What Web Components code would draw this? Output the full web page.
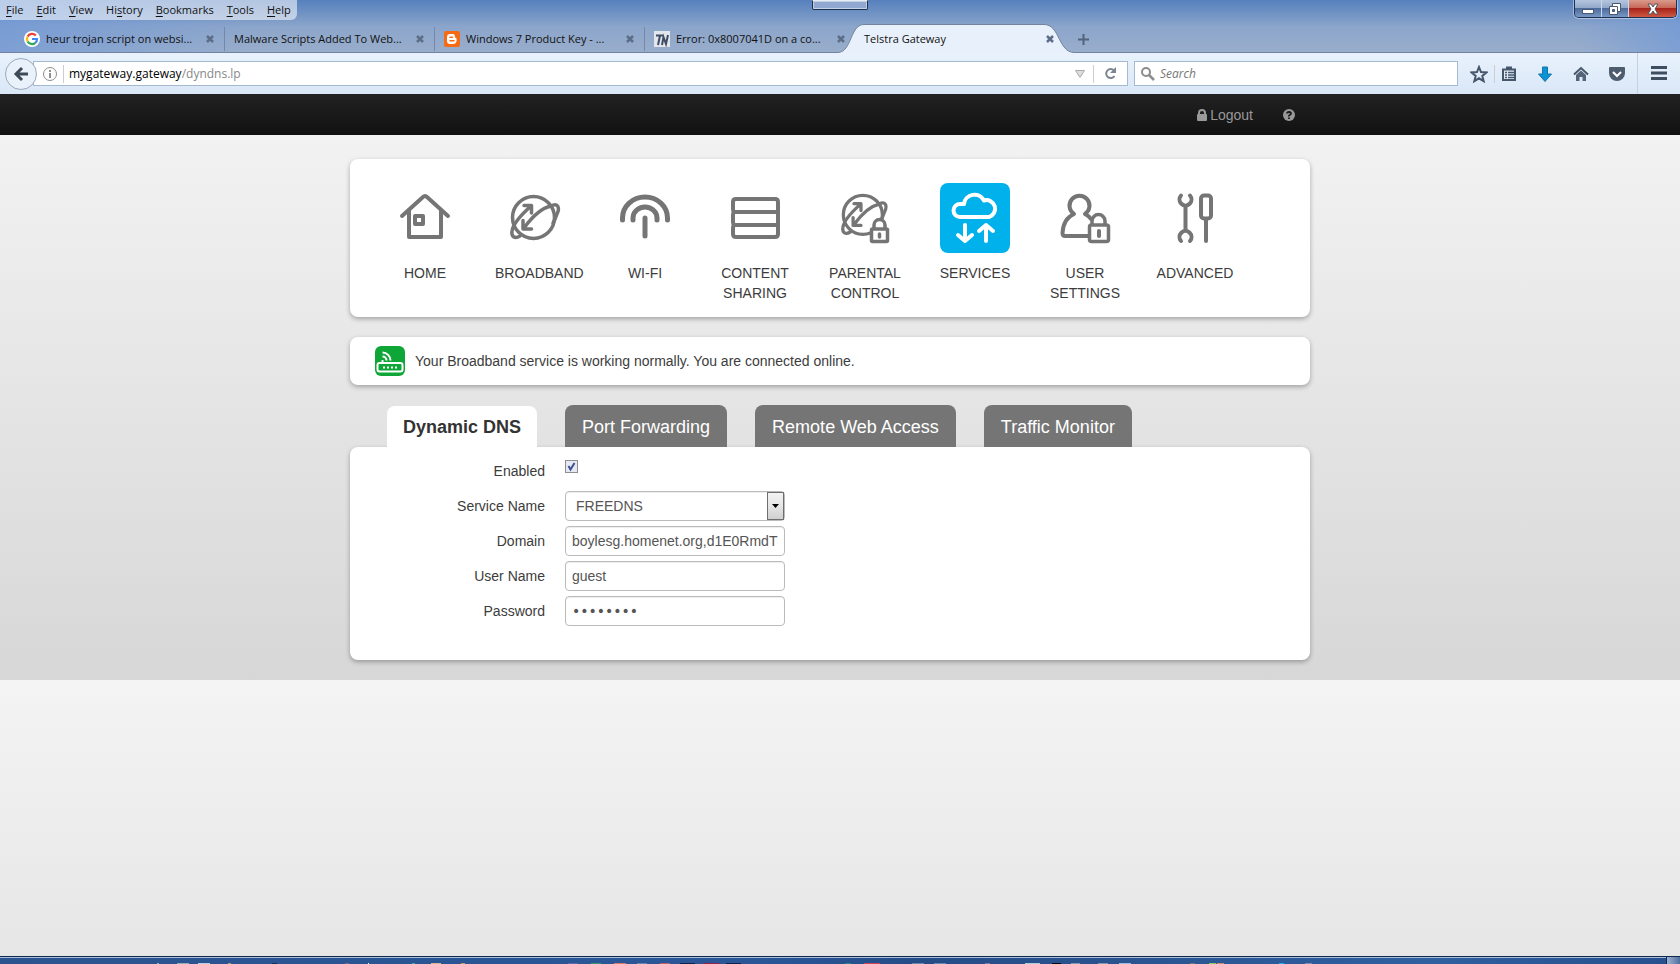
<!DOCTYPE html>
<html lang="en">
<head>
<meta charset="utf-8">
<title>Telstra Gateway</title>
<style>
html,body{margin:0;height:100%}
body{font-family:"Liberation Sans",Arial,sans-serif;font-size:14px;line-height:20px;color:#3c3c3c;background:#e6e6e6}
</style>
</head>
<body>
<desktop-screen></desktop-screen>
<script>
const define = (name, html, setup) => {
  const template = document.createElement('template');
  template.innerHTML = html;
  customElements.define(name, class extends HTMLElement {
    connectedCallback() {
      if (this.shadowRoot) return;
      this.attachShadow({ mode: 'open' }).append(template.content.cloneNode(true));
      if (setup) setup(this, this.shadowRoot);
    }
  });
};
const base = `*{box-sizing:border-box}button{font:inherit;color:inherit;background:none;border:0;padding:0;margin:0}a{color:inherit;text-decoration:none}svg{display:block}`;

/* ---------- icons ---------- */
const globe = `<g stroke-width="3.500"><circle cx="23.500" cy="24.500" r="21"/><path d="M10 43C5 46 1 44 2 38C3 31 11 22 21 13M14 12.500h7.500v7.500M41 13C48 9 50 15 47 21C46 24 45 27 43 30M41 13C32 15 22 24 14 35M13 27.500v8.500h8.500"/></g>`;
const icons = {
  home: `<path d="M2 23L23 4Q25 2 27 4L48 23M9 18V44H41V18"/><rect x="15" y="23" width="8" height="8"/>`,
  broadband: globe,
  wifi: `<path d="M2.500 27V25a22.500 21 0 0 1 45 0v2M13 27v-2a12 11 0 0 1 24 0v2M25 25V43" stroke-width="5"/>`,
  content: `<path d="M6 6H45Q48 6 48 9V41Q48 44 45 44H6Q3 44 3 41V35Q3 33 4 32Q3 31 3 29V22Q3 20 4 19Q3 18 3 16V9Q3 6 6 6ZM4 19H48M4 32H48"/>`,
  parental: `<g transform="translate(1 -1) scale(.93)">${globe}</g><g stroke-width="3.500"><path d="M34 36v-4a5.500 5.500 0 0 1 11 0v4" fill="#fff"/><rect x="31.500" y="36" width="16" height="12.500" rx="1" fill="#fff"/><path d="M39.500 41v3"/></g>`,
  services: `<g stroke="#fff"><path d="M10 24A6.500 6.500 0 0 1 10 11H14A10.500 10 0 0 1 34 7.500A8.300 8.300 0 1 1 39 24Z"/><path d="M15 32v16M8 42l7 6l7-6M36 48V32M29 38l7-6l7 6"/></g>`,
  user: `<path d="M28 43H5Q2.500 43 2.500 40C3 31 7 24 14 21A10 10 0 1 1 25 21Q29 23 31 26"/><g stroke-width="3.500"><path d="M32 32v-4a6.500 6.500 0 0 1 13 0v4" fill="#fff"/><rect x="29.500" y="32" width="19" height="16.500" rx="2" fill="#fff"/><path d="M39 38v5" stroke-width="4"/></g>`,
  advanced: `<path d="M15.500 14V37" stroke-width="4"/><path d="M11 2.500A6 6 0 1 0 20 2.500M11 48A6 6 0 1 1 20 48"/><rect x="31" y="2.500" width="10" height="23" rx="3"/><path d="M36 26V48"/>`
};

define('menu-bar', `<style>${base}
:host{display:block}
nav{display:inline-flex;gap:13px;height:20px;padding:0 6px;background:#ffffff8c;border-radius:0 0 6px 0;line-height:20px}
u{text-underline-offset:2px}
</style><nav><button><u>F</u>ile</button><button><u>E</u>dit</button><button><u>V</u>iew</button><button>Hi<u>s</u>tory</button><button><u>B</u>ookmarks</button><button><u>T</u>ools</button><button><u>H</u>elp</button></nav>`);

define('window-controls', `<style>${base}
:host{display:flex;height:18px;border:1px solid #1d2f52;border-top:0;border-radius:0 0 5px 5px;overflow:hidden;box-shadow:0 0 0 1px #ffffff66}
button{width:27px;display:grid;place-items:center;background:linear-gradient(#b4c5de,#93a9ca 45%,#4d6c9c 50%,#7797c4);border-right:1px solid #c9d8ec}
.x{width:47px;background:linear-gradient(#d99a8c,#c8695a 45%,#a8231b 50%,#cf5a43);border:0}
</style><button aria-label="Minimize"><svg width="12" height="14"><rect x=".5" y="7.500" width="11" height="4" fill="#fff" stroke="#4a5872"/></svg></button><button aria-label="Restore"><svg width="14" height="14" fill="#fff" stroke="#4a5872"><path d="M4.500 1.500h8v8h-8z"/><path d="M1.500 4.500h8v8h-8z"/><path d="M4.500 7.500h2v2h-2z" fill="#58709a"/></svg></button><button class="x" aria-label="Close"><svg width="14" height="14"><path d="M2 2h3l2 3l2-3h3L9 7l3 5H9L7 9l-2 3H2l3-5z" fill="#fff" stroke="#53565c"/></svg></button>`);

define('browser-tab', `<style>${base}
:host{box-sizing:border-box;display:flex;align-items:center;width:210px;height:24px;padding:0 9px;border-right:1px solid #7489aa;gap:6px}
:host([last]){border:0}
:host([active]){width:213px;border:0;position:relative;padding:0 13px 0 9px}
.shape{display:none;position:absolute;left:-17px;top:-3px;z-index:-1}
:host([active]) .shape{display:block}
a{flex:1;min-width:0;white-space:nowrap}
::slotted(svg){display:block;flex:none}
</style><svg class="shape" width="236" height="29"><path d="M0 28.500C14 28 12 .5 26 .5H206C222 .5 220 28 236 28.500V29H0Z" fill="#e8f1fb"/><path d="M0 28.500C14 28 12 .5 26 .5H206C222 .5 220 28 236 28.500" fill="none" stroke="#71839f"/></svg>
<slot name="icon"></slot><a href="#"><slot></slot></a><button aria-label="Close tab"><svg width="10" height="10"><path d="M2 2l6 6M8 2l-6 6" stroke="#5c6d87" stroke-width="2.500"/></svg></button>`);

define('tab-strip', `<style>${base}
:host{display:flex;align-items:center;height:28px;padding-left:15px;position:relative;z-index:0;box-shadow:inset 0 -1px #71839f}
.new{margin-left:10px}
</style>
<browser-tab><svg slot="icon" width="16" height="16"><circle cx="8" cy="8" r="8" fill="#fff"/><g fill="none" stroke-width="2.200"><path d="M11.800 4.500A5 5 0 0 0 3.600 5.600" stroke="#ea4335"/><path d="M3.600 5.600A5 5 0 0 0 3.600 10.400" stroke="#fbbc05"/><path d="M3.600 10.400A5 5 0 0 0 11.300 11.800" stroke="#34a853"/><path d="M11.300 11.800A5 5 0 0 0 13 8H8" stroke="#4285f4"/></g></svg>heur trojan script on websi...</browser-tab>
<browser-tab>Malware Scripts Added To Web...</browser-tab>
<browser-tab><svg slot="icon" width="16" height="16"><rect width="16" height="16" rx="2" fill="#f56a14"/><path d="M6 3h3q2 0 2 3q0 1 1.500 1.200q.5 3-.5 4.300q-1 1.500-3 1.500H6q-3 0-3-3V6q0-3 3-3z" fill="#fff"/><path d="M6 6.200h2.500M6 9.800h4" stroke="#f56a14" stroke-width="1.400" stroke-linecap="round"/></svg>Windows 7 Product Key - ...</browser-tab>
<browser-tab last><svg slot="icon" width="16" height="16"><rect width="16" height="16" fill="#e3e6ea"/><path d="M2 4.500h7M6 4.500L4 14M8 14L9.500 6L12 13L14 4" fill="none" stroke="#3f4d66" stroke-width="2"/></svg>Error: 0x8007041D on a co...</browser-tab>
<browser-tab active>Telstra Gateway</browser-tab>
<button class="new" aria-label="New tab"><svg width="11" height="11"><path d="M5.500 0v11M0 5.500h11" stroke="#53637c" stroke-width="2"/></svg></button>`);

define('nav-toolbar', `<style>${base}
:host{box-sizing:border-box;display:flex;align-items:center;height:41px;padding:0 13px 0 5px;background:linear-gradient(#e9f2fc,#d9e7f7);font-size:12px}
.back{width:32px;height:32px;flex:none;border:1px solid #9aa9bc;border-radius:50%;background:#e9f2fb;display:grid;place-items:center;z-index:1}
.box{display:flex;align-items:center;height:25px;background:#fff;border:1px solid #a7b9cf}
.url{flex:1;margin-left:-4px;padding-left:8px}
i{width:1px;height:18px;background:#c9ced6;flex:none}
.info{margin-right:5px}
.address{flex:1;display:flex;padding-left:5px}
.address a{color:#888}.address b{font-weight:400;color:#000}
.tri{margin-right:8px}.reload{margin:0 10px}
.search{width:324px;margin-left:6px;padding-left:6px;gap:5px}
input{font:inherit;font-style:italic;border:0;outline:0;padding:0;width:280px;background:none}
input::placeholder{color:#777;opacity:1}
.tools{display:flex;align-items:center;margin-left:12px;gap:20px}
.pair{display:flex;align-items:center;gap:6px}
.menu{border-left:1px solid #c3d1e2;padding:13px 0 14px 13px;margin-left:-8px}
</style>
<button class="back" aria-label="Back"><svg width="16" height="16"><path d="M15 8H3M9 2L3 8l6 6" fill="none" stroke="#3f4a59" stroke-width="3"/></svg></button>
<div class="box url"><svg class="info" width="16" height="16" fill="none" stroke="#8e8e8e"><circle cx="8" cy="8" r="6.500"/><path d="M8 7v5M8 4v2" stroke-width="2"/></svg><i></i><div class="address"><a href="#"><b>mygateway.gateway</b>/dyndns.lp</a></div><button class="tri" aria-label="History"><svg width="10" height="8"><path d="M.5.5h9l-4.500 7z" fill="#ddd" stroke="#aaa"/></svg></button><i></i><button class="reload" aria-label="Reload"><svg width="13" height="13"><path d="M10 3.500A4.500 4.500 0 1 0 10.500 9" fill="none" stroke="#7d8590" stroke-width="2"/><path d="M12 0v6H6z" fill="#7d8590"/></svg></button></div>
<div class="box search"><svg width="14" height="14" fill="none" stroke="#8c8c8c"><circle cx="5" cy="5" r="4" stroke-width="2"/><path d="M8 8l5 5" stroke-width="2.500"/></svg><input aria-label="Search" placeholder="Search"></div>
<div class="tools">
<div class="pair"><button aria-label="Bookmark"><svg width="18" height="18"><path d="M9 2l2 5 5.500.4-4.200 3.500 1.400 5.300L9 13.300l-4.700 2.900 1.400-5.300L1.500 7.400 7 7z" fill="none" stroke="#46566b" stroke-width="2"/></svg></button><i></i><button aria-label="Bookmarks list"><svg width="16" height="18" fill="none" stroke="#46566b"><path d="M2 4.500h12V15H2z" stroke-width="2"/><path d="M5 3h6" stroke-width="3"/><path d="M4 7.500h2M7 7.500h6M4 10h2M7 10h6M4 12.500h2M7 12.500h6" stroke-width="1.300"/></svg></button></div>
<button aria-label="Downloads"><svg width="16" height="16"><path d="M5.500 1h5v7h4L8 15.500 1.500 8h4z" fill="#0a94d6" stroke="#1873a6"/></svg></button>
<button aria-label="Home"><svg width="16" height="16"><path d="M1 8.500L8 2l7 6.500" fill="none" stroke="#46566b" stroke-width="2"/><path d="M3 9l5-4.500L13 9v6H9.500v-4h-3v4H3z" fill="#56647a"/></svg></button>
<button aria-label="Pocket"><svg width="16" height="16"><path d="M0 2q0-1 1-1h14q1 0 1 1v5a8 8 0 0 1-16 0z" fill="#4e5c70"/><path d="M4 6l4 4 4-4" fill="none" stroke="#fff" stroke-width="2"/></svg></button>
<button class="menu" aria-label="Menu"><svg width="16" height="14"><path d="M0 1.500h16M0 7h16M0 12.500h16" stroke="#3f4d61" stroke-width="3"/></svg></button></div>`);

define('browser-chrome', `<style>${base}
:host{display:block;font-family:"Open Sans","Noto Sans",sans-serif;font-size:11px;line-height:16px;color:#111}
.frame{background:linear-gradient(90deg,#6f98d8aa,#0000 15%,#0000 94%,#6f98d8aa),linear-gradient(#5680bd,#8ba5cb 50%,#9aaecb)}
.top{display:grid;grid-template-columns:1fr auto 1fr;align-items:start;height:25px}
.grip{width:56px;height:10px;border:1px solid #1d3050;border-top-color:#e9eef5;border-radius:0 0 2px 2px;background:#91a9d0;box-shadow:inset 0 0 0 1px #c4d1e4}
window-controls{justify-self:end;margin-right:3px}
</style><div class="frame"><div class="top"><menu-bar></menu-bar><div class="grip"></div><window-controls></window-controls></div><tab-strip></tab-strip></div><nav-toolbar></nav-toolbar>`);

/* ---------- gateway page ---------- */
define('account-bar', `<style>${base}
:host{box-sizing:border-box;display:flex;justify-content:center;padding-right:20px;height:41px;background:linear-gradient(#222,#111);color:#999}
.row{width:960px;display:flex;justify-content:flex-end;align-items:center;gap:30px;padding-right:15px}
a{display:flex;align-items:center;gap:3px}
</style><div class="row"><a href="#"><svg width="10" height="12"><rect y="5" width="10" height="7" rx="1" fill="#999"/><path d="M2 6V4a3 3 0 0 1 6 0v2" fill="none" stroke="#999" stroke-width="2"/></svg>Logout</a><a href="#" aria-label="Help"><svg width="12" height="12"><circle cx="6" cy="6" r="6" fill="#999"/><path d="M4 4.500Q4 3 6 3T8 4.600Q8 5.500 6.800 6T6 7.500M6 8.500v1.500" fill="none" stroke="#1a1a1a" stroke-width="1.800"/></svg></a></div>`);

define('nav-item', `<style>${base}
:host{display:block;width:80px;flex:none}
a{display:block;text-align:center}
.tile{width:70px;height:70px;margin:0 auto 10px;border-radius:8px;display:grid;place-items:center}
:host([active]) .tile{background:#00b1ec}
svg{overflow:visible;fill:none;stroke:#757575;stroke-width:4;stroke-linecap:round;stroke-linejoin:round}
</style><a href="#"><div class="tile"></div><slot></slot></a>`, (host, root) => {
  root.querySelector('.tile').innerHTML = `<svg width="50" height="50">${icons[host.getAttribute('icon')]}</svg>`;
});

define('white-card', `<style>${base}
:host{display:block;background:#fff;border-radius:8px;box-shadow:0 2px 5px #0000004d}
</style><slot></slot>`);

define('main-nav', `<style>${base}
:host{display:block}
nav{display:flex;gap:30px;padding:24px 35px 14px}
</style><white-card><nav>
<nav-item icon="home">HOME</nav-item><nav-item icon="broadband">BROADBAND</nav-item><nav-item icon="wifi">WI-FI</nav-item><nav-item icon="content">CONTENT SHARING</nav-item><nav-item icon="parental">PARENTAL CONTROL</nav-item><nav-item icon="services" active>SERVICES</nav-item><nav-item icon="user">USER SETTINGS</nav-item><nav-item icon="advanced">ADVANCED</nav-item></nav></white-card>`);

define('service-status', `<style>${base}
:host{display:block}
div{display:flex;align-items:center;gap:10px;height:48px;padding:0 25px}
</style><white-card><div><svg width="30" height="30"><rect width="30" height="30" rx="6" fill="#0fa638"/><g fill="none" stroke="#fff"><rect x="2.500" y="17" width="25" height="8.500" rx="2" stroke-width="2"/><path d="M7.500 17v-3M7.500 10.500a4 4 0 0 1 4 4M7.500 6.500a8 8 0 0 1 8 8" stroke-width="2"/><path d="M8 21.500h2M12 21.500h2M16 21.500h2M20 21.500h2" stroke-width="2"/></g></svg><slot></slot></div></white-card>`);

define('section-tabs', `<style>${base}
:host{display:flex;align-items:flex-end;gap:28px;padding-left:37px;font-size:18px}
a{display:block;padding:12px 17px 10px;background:#757575;color:#fff;border-radius:8px 8px 0 0}
.on{background:#fff;color:#333;font-weight:700;padding:11px 16px 10px}
</style><a class="on" href="#">Dynamic DNS</a><a href="#">Port Forwarding</a><a href="#">Remote Web Access</a><a href="#">Traffic Monitor</a>`);

define('dns-form', `<style>${base}
:host{display:block}
form{display:grid;grid-template-columns:195px 220px;column-gap:20px;row-gap:5px;grid-auto-rows:30px;align-items:center;padding:9px 0 34px}
label{text-align:right}
.text,select{width:220px;height:30px;font:inherit;color:#555;background:#fff;border:1px solid #bbb;border-radius:4px;padding:0 6px;margin:0;outline:0;box-shadow:inset 0 1px 1px #00000013}
#pw{font-family:"DejaVu Sans",sans-serif}
.pick{position:relative}
select{appearance:none;padding-left:10px;display:block}
.pick svg{position:absolute;right:0;top:0;pointer-events:none}
.check{appearance:none;width:13px;height:13px;margin:0;align-self:start;margin-top:4px;border:1px solid #8e8f8f;background:#e4e9f4 url("data:image/svg+xml,%3Csvg xmlns='http://www.w3.org/2000/svg' width='11' height='11'%3E%3Cpath d='M2.500 5l2 3.500L8.500 2' fill='none' stroke='%23405090' stroke-width='2'/%3E%3C/svg%3E") no-repeat}
</style><form><label for="en">Enabled</label><input class="check" id="en" type="checkbox" checked>
<label for="sv">Service Name</label><div class="pick"><select id="sv"><option>FREEDNS</option></select><svg width="18" height="30"><defs><linearGradient id="g" x2="0" y2="1"><stop stop-color="#f3f3f3"/><stop offset=".5" stop-color="#e6e6e6"/><stop offset="1" stop-color="#cfcfcf"/></linearGradient></defs><rect x=".5" y="1.500" width="16" height="27" fill="url(#g)" stroke="#6e6e6e"/><path d="M5 13h7l-3.500 4z"/></svg></div>
<label for="dm">Domain</label><input class="text" id="dm" value="boylesg.homenet.org,d1E0RmdT">
<label for="un">User Name</label><input class="text" id="un" value="guest">
<label for="pw">Password</label><input class="text" id="pw" type="password" value="password"></form>`);

define('gateway-page', `<style>${base}
:host{display:block}
main{padding:24px 20px 20px 0;background:linear-gradient(#f2f2f2,#d7d7d7)}
.content{width:960px;margin:0 auto;display:flex;flex-direction:column;gap:20px}
</style><account-bar></account-bar><main><div class="content"><main-nav></main-nav><service-status>Your Broadband service is working normally. You are connected online.</service-status><section><section-tabs></section-tabs><white-card><dns-form></dns-form></white-card></section></div></main>`);

define('task-bar', `<style>${base}
:host{box-sizing:border-box;display:flex;justify-content:flex-end;height:8px;background:linear-gradient(90deg,#2b548f,#2a5698 45%,#254c87 55%,#30609f 85%,#274f8d);border-top:1px solid #10294f;box-shadow:inset 0 1px #a9bdd8;overflow:hidden}
.bits{flex:1;height:7px}
.peek{width:14px;border-left:1px solid #10294f;background:linear-gradient(90deg,#9cb2d0,#506f9e)}
</style><svg class="bits" aria-hidden="true"></svg><div class="peek"></div>`, (host, root) => {
  const bits = [[157,2,'#8bb'],[177,12,'#9ab'],[198,12,'#bcd'],[228,3,'#b96'],[272,5,'#134'],[345,4,'#867'],[368,1,'#fff'],[412,3,'#4a8'],[431,10,'#cb8'],[461,4,'#c95'],[568,10,'#66a'],[591,10,'#397'],[614,12,'#d76'],[637,10,'#68a'],[660,10,'#b66'],[680,15,'#124'],[703,16,'#924'],[726,15,'#124'],[845,6,'#288'],[864,16,'#c45'],[912,12,'#68a'],[934,12,'#68a'],[985,5,'#879'],[1025,15,'#acd'],[1052,9,'#000'],[1071,9,'#89a'],[1098,10,'#89a'],[1119,12,'#9bd'],[1190,5,'#777'],[1209,7,'#8c5'],[1217,7,'#c87'],[1279,5,'#2af'],[1305,7,'#88a']];
  root.querySelector('svg').innerHTML = bits.map(([x, w, c]) => `<rect x="${x}" y="6" width="${w}" height="1" fill="${c}"/>`).join('');
});

define('desktop-screen', `<style>${base}
:host{display:flex;flex-direction:column;min-height:100vh}
.rest{flex:1;background:linear-gradient(#f4f4f4,#e6e6e6)}
</style><browser-chrome></browser-chrome><gateway-page></gateway-page><div class="rest"></div><task-bar></task-bar>`);
</script>
</body>
</html>
